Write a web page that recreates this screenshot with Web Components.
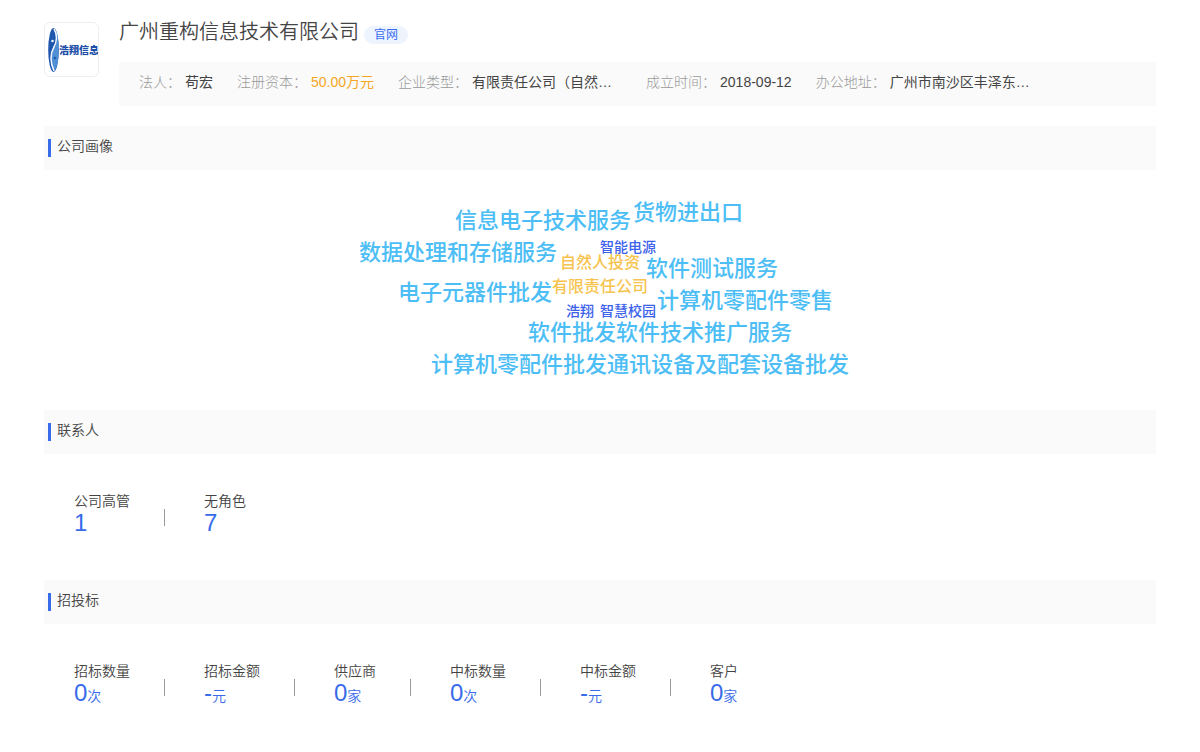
<!DOCTYPE html>
<html lang="zh-CN">
<head>
<meta charset="utf-8">
<title>广州重构信息技术有限公司</title>
<style>
body { margin: 0; background: #fff; color: #444; font: 14px/20px "Liberation Sans", "Noto Sans CJK SC", sans-serif; }
</style>
</head>
<body>
<company-page></company-page>
<script>
const define = (name, html) => customElements.define(name, class extends HTMLElement {
  constructor() {
    super();
    this.attachShadow({ mode: 'open' }).innerHTML = html;
  }
});

define('company-logo', `
<style>
:host { display: flex; flex: none; box-sizing: border-box; width: 55px; height: 55px; border: 1px solid #eee; border-radius: 6px; align-items: center; padding-left: 3px; overflow: hidden; }
svg { flex: none; width: 11px; height: 46px; }
span { font: 900 10px/32px "Noto Sans CJK SC", sans-serif; color: #1d4fa8; white-space: nowrap; }
</style>
<svg viewBox="0 0 11 46" aria-hidden="true">
<ellipse cx="5.5" cy="23" rx="5.3" ry="22" fill="#1f55ad"/>
<path d="M6 2C10 6 10 15 7 20C3 26 2 35 6 44C8 43 9.500 38 10.300 31C10.800 24 10.800 17 10 11C9 6 8 3 6 2Z" fill="#4f8fd4"/>
<path d="M6 2C9.500 7 9 15 6 20C2 27 2 35 6 44" fill="none" stroke="#f2f8fd" stroke-width="1.500"/>
<circle cx="4.500" cy="14" r="1.300" fill="#e8f3fc"/><circle cx="7" cy="31" r="1.300" fill="#1f55ad"/>
</svg><span>浩翔信息</span>`);

define('info-item', `
<style>
:host { display: flex; gap: 4px; color: #444; white-space: nowrap; }
:host([wide]) .value { min-width: 150px; }
:host([money]) .value { color: #f5a623; }
.label { color: #999; font-weight: 300; }
</style>
<span class="label"><slot name="label"></slot></span><span class="value"><slot></slot></span>`);

define('company-header', `
<style>
:host { display: flex; gap: 20px; }
.main { flex: 1; min-width: 0; }
.title { display: flex; align-items: flex-start; gap: 5px; height: 40px; }
h1 { margin: 0; font-size: 20px; line-height: 20px; font-weight: 350; }
a { margin-top: 4px; padding: 0 10px; border-radius: 9px; background: #eef4fe; color: #3a6cf0; font-size: 12px; line-height: 18px; text-decoration: none; }
.info { display: flex; flex-wrap: wrap; gap: 0 24px; padding: 10px 20px 14px; background: #fafafa; }
</style>
<company-logo></company-logo>
<div class="main">
<div class="title"><h1>广州重构信息技术有限公司</h1><a href="#site">官网</a></div>
<div class="info">
<info-item><span slot="label">法人：</span>苟宏</info-item>
<info-item money><span slot="label">注册资本：</span>50.00万元</info-item>
<info-item wide><span slot="label">企业类型：</span>有限责任公司（自然…</info-item>
<info-item><span slot="label">成立时间：</span>2018-09-12</info-item>
<info-item wide><span slot="label">办公地址：</span>广州市南沙区丰泽东…</info-item>
</div>
</div>`);

define('page-section', `
<style>
:host { display: block; }
header { display: flex; align-items: center; gap: 6px; height: 44px; padding-left: 4px; background: #fafafa; }
header::before { content: ""; width: 3px; height: 18px; background: #386bea; }
h2 { margin: 0 0 4px; font-size: 14px; line-height: 20px; font-weight: 350; }
</style>
<header><h2><slot name="title"></slot></h2></header>
<slot></slot>`);

define('stat-item', `
<style>
:host { display: flex; align-items: center; gap: 34px; font-weight: 350; }
:host(:not([last]))::after { content: ""; width: 1px; height: 17px; margin-top: 6px; background: #999; }
.value { color: #386bea; line-height: 24px; }
b { font-size: 24px; font-weight: 400; }
</style>
<div><div><slot name="label"></slot></div><div class="value"><b><slot></slot></b><slot name="unit"></slot></div></div>`);

define('stat-row', `
<style>:host { display: flex; flex-wrap: wrap; gap: 20px 39px; padding: 37px 30px 42px; }</style>
<slot></slot>`);

// Word cloud: each word carries its own place on the canvas.
customElements.define('word-cloud', class extends HTMLElement {
  connectedCallback() {
    const words = [
      ['信息电子技术服务', 101, 36, 'l'], ['货物进出口', 279, 28, 'l'],
      ['数据处理和存储服务', 5, 68, 'l'], ['智能电源', 246, 62, 's'],
      ['自然人投资', 206, 78, 'm'], ['软件测试服务', 292, 84, 'l'],
      ['电子元器件批发', 44, 108, 'l'], ['有限责任公司', 198, 102, 'm'],
      ['计算机零配件零售', 303, 116, 'l'], ['浩翔', 212, 126, 's'],
      ['智慧校园', 246, 126, 's'], ['软件批发', 174, 148, 'l'],
      ['软件技术推广服务', 262, 148, 'l'], ['计算机零配件批发', 77, 180, 'l'],
      ['通讯设备及配套设备批发', 253, 180, 'l']
    ];
    this.attachShadow({ mode: 'open' }).innerHTML = `
<style>
:host { display: block; position: relative; width: 492px; height: 240px; margin: 0 auto; }
span { position: absolute; white-space: nowrap; font-weight: 500; line-height: 30px; }
.l { font-size: 22px; color: #4dbef5; }
.m { font-size: 16px; color: #f7c34f; }
.s { font-size: 14px; color: #3d62ea; }
</style>` + words.map(([t, x, y, c]) => `<span class="${c}" style="left:${x}px;top:${y}px">${t}</span>`).join('');
  }
});

define('company-page', `
<style>
:host { display: block; padding: 22px 44px 0; }
company-header { margin-bottom: 20px; }
</style>
<company-header></company-header>
<page-section><span slot="title">公司画像</span><word-cloud></word-cloud></page-section>
<page-section><span slot="title">联系人</span><stat-row>
<stat-item><span slot="label">公司高管</span>1</stat-item>
<stat-item last><span slot="label">无角色</span>7</stat-item>
</stat-row></page-section>
<page-section><span slot="title">招投标</span><stat-row>
<stat-item><span slot="label">招标数量</span>0<span slot="unit">次</span></stat-item>
<stat-item><span slot="label">招标金额</span>-<span slot="unit">元</span></stat-item>
<stat-item><span slot="label">供应商</span>0<span slot="unit">家</span></stat-item>
<stat-item><span slot="label">中标数量</span>0<span slot="unit">次</span></stat-item>
<stat-item><span slot="label">中标金额</span>-<span slot="unit">元</span></stat-item>
<stat-item last><span slot="label">客户</span>0<span slot="unit">家</span></stat-item>
</stat-row></page-section>`);
</script>
</body>
</html>
